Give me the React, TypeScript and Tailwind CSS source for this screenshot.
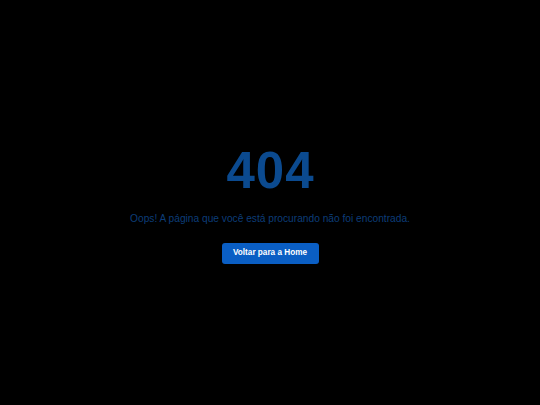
import React from "react";

export default function App() {
  return (
    <div className="min-h-screen bg-black flex flex-col items-center justify-center pt-[4px] text-center font-['Liberation_Sans',Arial,sans-serif]">
      <h1 className="text-[51px] leading-none font-bold tracking-[1px] pl-[1px] text-[#0b4a8f]">404</h1>
      <p className="mt-[16px] text-[10.2px] leading-[14px] text-[#0c3d78]">
        Oops! A página que você está procurando não foi encontrada.
      </p>
      <button className="mt-[17px] bg-[#0a5ec4] text-white text-[8.2px] font-bold w-[97px] h-[21px] rounded-[3px]">
        Voltar para a Home
      </button>
    </div>
  );
}
